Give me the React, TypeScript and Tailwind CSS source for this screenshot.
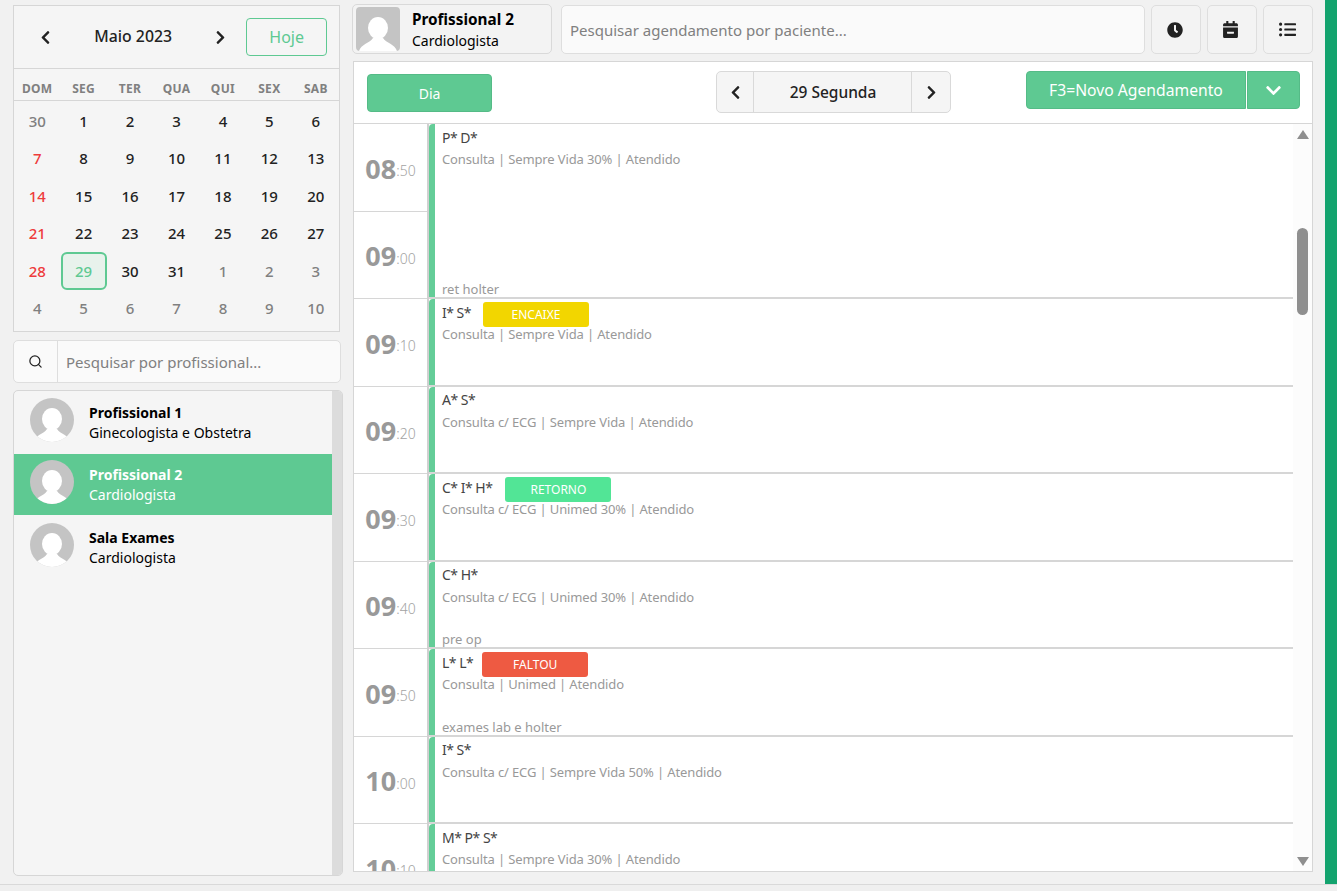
import React from "react";
import { FaChevronDown, FaChevronLeft, FaChevronRight, FaClock, FaCalendarMinus, FaListUl } from "react-icons/fa";
import { Search } from "lucide-react";

const weekDays = ["DOM", "SEG", "TER", "QUA", "QUI", "SEX", "SAB"];

const days = [
  30, 1, 2, 3, 4, 5, 6, 7, 8, 9, 10, 11, 12, 13, 14, 15, 16, 17, 18, 19, 20, 21, 22, 23, 24, 25, 26, 27, 28, 29, 30,
  31, 1, 2, 3, 4, 5, 6, 7, 8, 9, 10,
];

const slots = [
  ["08", "50"],
  ["09", "00"],
  ["09", "10"],
  ["09", "20"],
  ["09", "30"],
  ["09", "40"],
  ["09", "50"],
  ["10", "00"],
  ["10", "10"],
];

const events = [
  { name: "P* D*", info: "Consulta | Sempre Vida 30% | Atendido", note: "ret holter", tall: true },
  { name: "I* S*", info: "Consulta | Sempre Vida | Atendido", badge: "ENCAIXE", color: "ml-[12px] bg-[#f2d600]" },
  { name: "A* S*", info: "Consulta c/ ECG | Sempre Vida | Atendido" },
  { name: "C* I* H*", info: "Consulta c/ ECG | Unimed 30% | Atendido", badge: "RETORNO", color: "ml-[13px] bg-[#52e596]" },
  { name: "C* H*", info: "Consulta c/ ECG | Unimed 30% | Atendido", note: "pre op" },
  { name: "L* L*", info: "Consulta | Unimed | Atendido", note: "exames lab e holter", badge: "FALTOU", color: "ml-[9px] bg-[#ee5a42]" },
  { name: "I* S*", info: "Consulta c/ ECG | Sempre Vida 50% | Atendido" },
  { name: "M* P* S*", info: "Consulta | Sempre Vida 30% | Atendido" },
];

const professionals = [
  { name: "Profissional 1", spec: "Ginecologista e Obstetra", row: "h-[63px] text-black", pic: "mt-[7px]" },
  { name: "Profissional 2", spec: "Cardiologista", row: "h-[61px] bg-[#5ec992] text-white", pic: "mt-[6px]" },
  { name: "Sala Exames", spec: "Cardiologista", row: "h-[65px] text-black", pic: "mt-[8px]" },
];

const Avatar = ({ square, className = "" }: { square?: boolean; className?: string }) => (
  <svg
    viewBox="0 0 44 44"
    className={`w-[44px] h-[44px] shrink-0 ${square ? "rounded-[4px]" : "rounded-full"} ${className}`}
  >
    <rect width="44" height="44" fill="#c4c4c4" />
    <ellipse cx="22" cy="21" rx="10" ry="11" fill="#fff" />
    <path d="M3 44C5 37 14 36 17 31h10c3 5 12 6 14 13z" fill="#fff" />
  </svg>
);

const Calendar = () => (
  <div className="w-[327px] h-[327px] border border-[#d6d6d6] bg-[#f5f5f5] flex flex-col">
    <div className="h-[63px] border-b border-[#d6d6d6] flex items-center pl-[24px] pr-[12px] text-[#222]">
      <FaChevronLeft className="text-[15px]" />
      <span className="w-[161px] text-center text-[15.8px] font-medium">Maio 2023</span>
      <FaChevronRight className="text-[15px]" />
      <button className="ml-[18px] w-[81px] h-[38px] border border-[#5ec992] rounded-[4px] text-[16px] text-[#5ec992]">
        Hoje
      </button>
    </div>
    <div className="h-[32px] pt-[9px] border-b border-[#d6d6d6] grid grid-cols-7 items-center">
      {weekDays.map((d) => (
        <span key={d} className="text-center text-[12px] font-bold text-[#808080] tracking-[0.3px]">
          {d}
        </span>
      ))}
    </div>
    <div className="pt-[1px] grid grid-cols-7 auto-rows-[37.5px]">
      {days.map((d, i) => {
        const muted = i === 0 || i > 31;
        const sunday = i % 7 === 0 && !muted;
        if (i === 29) {
          return (
            <div key={i} className="flex items-center justify-center">
              <span className="w-[46px] h-[38px] border-2 border-[#5ec992] bg-[#e8f2ec] rounded-[6px] flex items-center justify-center text-[15px] font-medium text-[#5ec992]">
                {d}
              </span>
            </div>
          );
        }
        return (
          <div
            key={i}
            className={`flex items-center justify-center text-[15px] font-medium ${
              sunday ? "text-[#ee3b3b]" : muted ? "text-[#808080]" : "text-[#222]"
            }`}
          >
            {d}
          </div>
        );
      })}
    </div>
  </div>
);

const ProfessionalList = () => (
  <div className="h-[486px] border border-[#d6d6d6] rounded-[5px] bg-[#f5f5f5] flex overflow-hidden">
    <div className="flex-1">
      {professionals.map((p) => (
        <div key={p.name} className={`flex items-center pl-[16px] ${p.row}`}>
          <Avatar className={`self-start ${p.pic}`} />
          <div className="ml-[15px] leading-[20px]">
            <div className="text-[14px] font-bold">{p.name}</div>
            <div className="text-[14px]">{p.spec}</div>
          </div>
        </div>
      ))}
    </div>
    <div className="w-[10px] bg-[#dcdcdc]" />
  </div>
);

const TopBar = () => (
  <div className="flex h-[50px]">
    <div className="w-[200px] border border-[#d9d9d9] rounded-[5px] bg-[#f3f3f3] flex items-center pl-[3px]">
      <Avatar square />
      <div className="ml-[12px] pt-[1px] text-black">
        <div className="text-[15.3px] font-bold leading-[22px]">Profissional 2</div>
        <div className="text-[14px] leading-[22px]">Cardiologista</div>
      </div>
    </div>
    <input
      placeholder="Pesquisar agendamento por paciente..."
      className="ml-[9px] mt-[1px] w-[584px] h-[49px] px-[8px] pt-[1px] border border-[#dedede] rounded-[5px] bg-[#fafafa] text-[15px] placeholder:text-[#808080] outline-none"
    />
    <div className="ml-[6px] mt-[1px] flex gap-[6px]">
      <button className="w-[50px] h-[49px] border border-[#dedede] rounded-[5px] bg-[#f3f3f3] flex items-center justify-center text-[#222]">
        <FaClock className="text-[16px] -ml-[2px]" />
      </button>
      <button className="w-[50px] h-[49px] border border-[#dedede] rounded-[5px] bg-[#f3f3f3] flex items-center justify-center text-[#222]">
        <FaCalendarMinus className="text-[17px] -ml-[3px]" />
      </button>
      <button className="w-[50px] h-[49px] border border-[#dedede] rounded-[5px] bg-[#f3f3f3] flex items-center justify-center text-[#222]">
        <FaListUl className="text-[17px] -ml-[2px]" />
      </button>
    </div>
  </div>
);

const Toolbar = () => (
  <div className="h-[62px] shrink-0 border-b border-[#d6d6d6] flex items-start pl-[13px]">
    <button className="mt-[12px] w-[125px] h-[38px] bg-[#5ec992] border border-[#55bb87] rounded-[4px] text-white text-[14px]">
      Dia
    </button>
    <div className="ml-[224px] mt-[9px] w-[235px] h-[42px] border border-[#d9d9d9] rounded-[5px] bg-[#f5f5f5] flex text-[#222]">
      <div className="w-[37px] border-r border-[#d9d9d9] flex items-center justify-center">
        <FaChevronLeft className="text-[15px]" />
      </div>
      <div className="flex-1 pt-[1px] pl-[1px] flex items-center justify-center text-[15.5px] font-medium">29 Segunda</div>
      <div className="w-[39px] border-l border-[#d9d9d9] flex items-center justify-center">
        <FaChevronRight className="text-[15px]" />
      </div>
    </div>
    <div className="ml-[75px] mt-[9px] flex h-[38px] text-white">
      <button className="w-[220px] pt-[2px] bg-[#5ec992] border border-[#55bb87] rounded-l-[4px] text-[15.7px]">
        F3=Novo Agendamento
      </button>
      <button className="ml-[1px] w-[53px] bg-[#5ec992] border border-[#55bb87] rounded-r-[4px] flex items-center justify-center">
        <FaChevronDown className="text-[17px]" />
      </button>
    </div>
  </div>
);

const Schedule = () => (
  <div className="flex-1 min-h-0 flex overflow-hidden">
    <div className="w-[75px] shrink-0 border-r-2 border-[#d0d0d0]">
      {slots.map(([h, m], i) => (
        <div
          key={i}
          className="h-[87.5px] border-b border-[#d6d6d6] flex items-center justify-center pt-[2px] text-[#999]"
        >
          <span className="text-[27px] font-bold leading-none">{h}</span>
          <span className="text-[14px] font-light self-center mt-[5px] text-[#a3a3a3]">:{m}</span>
        </div>
      ))}
    </div>
    <div className="flex-1 min-w-0">
      {events.map((e, i) => (
        <div
          key={i}
          className={`${e.tall ? "h-[175px]" : "h-[87.5px]"} border-b-2 border-[#d6d6d6] flex`}
        >
          <div className="w-[6px] bg-[#64cd98] rounded-tl-[4px]" />
          <div className="flex-1 pl-[7px] flex flex-col">
            <div className="h-[26px] flex items-center text-[14px] text-[#444]">
              <span className="tracking-[-0.5px]">{e.name}</span>
              {e.badge && (
                <span
                  className={`mt-[5px] w-[106px] h-[25px] rounded-[3px] ${e.color} text-white text-[12px] flex items-center justify-center`}
                >
                  {e.badge}
                </span>
              )}
            </div>
            <div className="text-[13px] leading-[18px] tracking-[-0.13px] text-[#999]">{e.info}</div>
            {e.note && <div className="mt-auto -mb-[1px] text-[13px] leading-[18px] text-[#999]">{e.note}</div>}
          </div>
        </div>
      ))}
    </div>
    <div className="w-[19px] shrink-0 bg-[#fcfcfc] flex flex-col items-center pt-[6px] pb-[5px]">
      <span className="w-0 h-0 border-x-[6px] border-x-transparent border-b-[9px] border-b-[#8f8f8f]" />
      <span className="mt-[89px] w-[11px] h-[87px] rounded-full bg-[#8f8f8f]" />
      <span className="mt-auto w-0 h-0 border-x-[6px] border-x-transparent border-t-[9px] border-t-[#8f8f8f]" />
    </div>
  </div>
);

const App = () => {
  return (
    <div
      className="h-[891px] w-full overflow-hidden bg-[#efefef] flex flex-col"
      style={{ fontFamily: '"Noto Sans", "Open Sans", sans-serif' }}
    >
      <div className="h-[885px] shrink-0 border-b border-[#d9d9d9] bg-[#f1f1f1] flex">
        <div className="w-[328px] ml-[13px] mt-[5px] shrink-0">
          <Calendar />
          <div className="mt-[8px] h-[43px] border border-[#dedede] rounded-[5px] bg-[#fafafa] flex">
            <div className="w-[44px] border-r border-[#dedede] flex items-center justify-center text-[#222]">
              <Search size={15} />
            </div>
            <input
              placeholder="Pesquisar por profissional..."
              className="flex-1 min-w-0 px-[8px] pt-[1px] bg-transparent text-[15px] placeholder:text-[#808080] outline-none"
            />
          </div>
          <div className="mt-[7px] w-[330px]">
            <ProfessionalList />
          </div>
        </div>
        <div className="ml-[11px] w-[961px] mt-[4px] shrink-0">
          <TopBar />
          <div className="ml-[1px] mt-[7px] h-[811px] border border-[#d6d6d6] bg-white flex flex-col">
            <Toolbar />
            <Schedule />
          </div>
        </div>
        <div className="ml-auto w-[12px] bg-[#13a36e]" />
      </div>
    </div>
  );
};

export default App;
